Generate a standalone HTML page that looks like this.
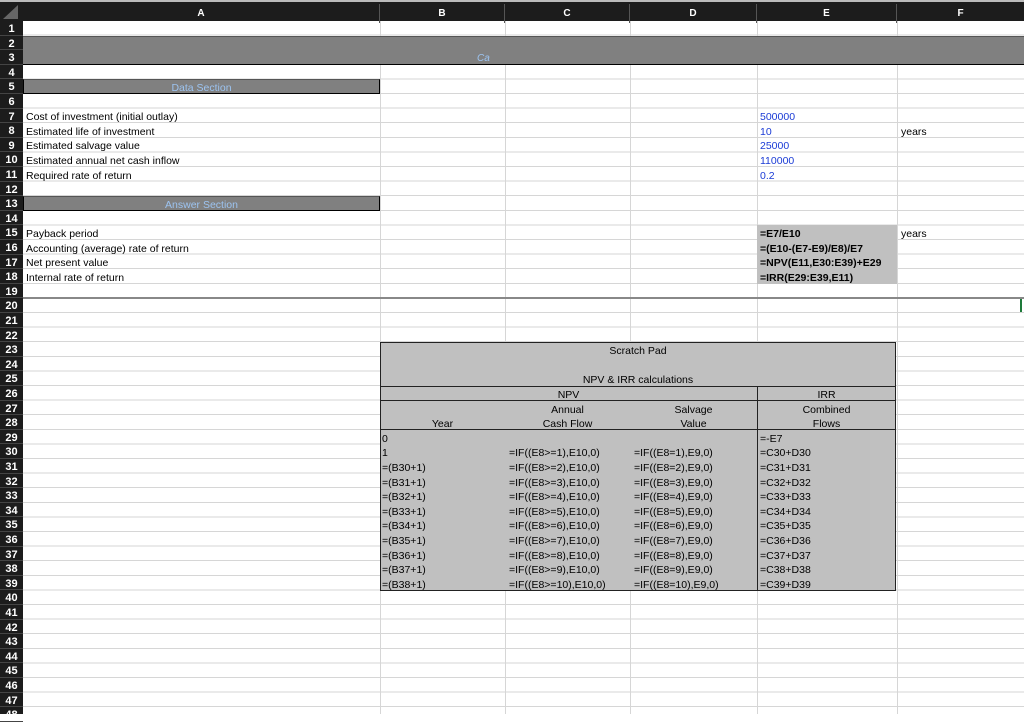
<!DOCTYPE html>
<html><head><meta charset="utf-8"><style>
*{margin:0;padding:0;box-sizing:border-box}
body{width:1024px;height:714px;overflow:hidden;background:#fff;position:relative;font-family:"Liberation Sans",Arial,sans-serif;font-size:10.5px;color:#000}
.a{position:absolute;white-space:nowrap;line-height:14.6px;height:14.6px;padding-top:1.5px}
.grid{position:absolute;left:23px;top:21px;width:1001px;height:693px;background:repeating-linear-gradient(to bottom,transparent 0,transparent 13.6px,#d6d6d6 13.6px,#d6d6d6 14.6px)}
.vl{position:absolute;top:21px;width:1px;height:693px;background:#d6d6d6}
.hdr{position:absolute;left:0;top:0;width:1024px;height:21px;background:#1c1c1c;border-top:2px solid #bbb}
.ch{position:absolute;top:2px;height:19px;line-height:19px;text-align:center;color:#fff;font-weight:bold;font-size:10px;border-right:1px solid #555}
.rh{position:absolute;left:0;top:21px;width:23px;height:693px;background:#1c1c1c}
.rn{position:absolute;left:0;width:23px;height:14.6px;text-align:center;color:#fff;font-weight:bold;font-size:11px;line-height:14.6px;padding-top:1px;border-bottom:1px solid #444}
.c{text-align:center}
.blue{color:#1a3bd6}
.b{font-weight:bold}
</style></head><body>
<div class="grid"></div>
<div class="vl" style="left:380px"></div>
<div class="vl" style="left:505px"></div>
<div class="vl" style="left:630px"></div>
<div class="vl" style="left:757px"></div>
<div class="vl" style="left:897px"></div>

<div class="hdr">
<div style="position:absolute;left:3px;top:3px;width:0;height:0;border-left:15px solid transparent;border-bottom:14px solid #666"></div>
<div class="ch" style="left:23px;width:357px">A</div>
<div class="ch" style="left:380px;width:125px">B</div>
<div class="ch" style="left:505px;width:125px">C</div>
<div class="ch" style="left:630px;width:127px">D</div>
<div class="ch" style="left:757px;width:140px">E</div>
<div class="ch" style="left:897px;width:127px;border-right:none">F</div>
</div>

<div style="position:absolute;left:23px;top:35.6px;width:1001px;height:29.2px;background:#808080;border-top:1px solid #555;border-bottom:1.5px solid #000"></div>
<div class="a" style="left:477px;top:50.2px;color:#9cc3f0;font-style:italic;font-size:10px">Ca</div>

<div class="a c" style="left:23px;top:79.4px;width:357px;background:#808080;border:1px solid #000;border-top-color:#555;color:#9cc3f0;padding-top:0.5px">Data Section</div>
<div class="a c" style="left:23px;top:196.2px;width:357px;background:#808080;border:1px solid #000;border-top-color:#555;color:#9cc3f0;padding-top:0.5px">Answer Section</div>

<div class="a" style="left:26px;top:108.6px">Cost of investment (initial outlay)</div>
<div class="a" style="left:26px;top:123.2px">Estimated life of investment</div>
<div class="a" style="left:26px;top:137.8px">Estimated salvage value</div>
<div class="a" style="left:26px;top:152.4px">Estimated annual net cash inflow</div>
<div class="a" style="left:26px;top:167px">Required rate of return</div>
<div class="a blue" style="left:760px;top:108.6px">500000</div>
<div class="a blue" style="left:760px;top:123.2px">10</div>
<div class="a" style="left:901px;top:123.2px">years</div>
<div class="a blue" style="left:760px;top:137.8px">25000</div>
<div class="a blue" style="left:760px;top:152.4px">110000</div>
<div class="a blue" style="left:760px;top:167px">0.2</div>

<div class="a" style="left:26px;top:225.4px">Payback period</div>
<div class="a" style="left:26px;top:240px">Accounting (average) rate of return</div>
<div class="a" style="left:26px;top:254.6px">Net present value</div>
<div class="a" style="left:26px;top:269.2px">Internal rate of return</div>
<div style="position:absolute;left:757px;top:225.4px;width:140px;height:58.4px;background:#c0c0c0"></div>
<div class="a b" style="left:760px;top:225.4px">=E7/E10</div>
<div class="a b" style="left:760px;top:240px">=(E10-(E7-E9)/E8)/E7</div>
<div class="a b" style="left:760px;top:254.6px">=NPV(E11,E30:E39)+E29</div>
<div class="a b" style="left:760px;top:269.2px">=IRR(E29:E39,E11)</div>
<div class="a" style="left:901px;top:225.4px">years</div>

<div style="position:absolute;left:23px;top:297px;width:1001px;height:2px;background:#888"></div>
<div style="position:absolute;left:1020px;top:299px;width:2px;height:13px;background:#1e7a3a"></div>

<div style="position:absolute;left:380px;top:342px;width:516px;height:249px;background:#c0c0c0;border:1px solid #222"></div>
<div style="position:absolute;left:380px;top:385.5px;width:516px;height:1px;background:#222"></div>
<div style="position:absolute;left:380px;top:400.1px;width:516px;height:1px;background:#222"></div>
<div style="position:absolute;left:380px;top:429.3px;width:516px;height:1px;background:#222"></div>
<div style="position:absolute;left:757px;top:385.5px;width:1px;height:205px;background:#222"></div>
<div class="a c" style="left:380px;top:342.6px;width:516px">Scratch Pad</div>
<div class="a c" style="left:380px;top:371.8px;width:516px">NPV &amp; IRR calculations</div>
<div class="a c" style="left:380px;top:386.4px;width:377px">NPV</div>
<div class="a c" style="left:757px;top:386.4px;width:139px">IRR</div>
<div class="a c" style="left:505px;top:401px;width:125px">Annual</div>
<div class="a c" style="left:630px;top:401px;width:127px">Salvage</div>
<div class="a c" style="left:757px;top:401px;width:139px">Combined</div>
<div class="a c" style="left:380px;top:415.6px;width:125px">Year</div>
<div class="a c" style="left:505px;top:415.6px;width:125px">Cash Flow</div>
<div class="a c" style="left:630px;top:415.6px;width:127px">Value</div>
<div class="a c" style="left:757px;top:415.6px;width:139px">Flows</div>

<div class="a" style="left:382px;top:430.2px">0</div>
<div class="a" style="left:760px;top:430.2px">=-E7</div>
<div class="a" style="left:382px;top:444.8px">1</div>
<div class="a" style="left:509px;top:444.8px">=IF((E8&gt;=1),E10,0)</div>
<div class="a" style="left:634px;top:444.8px">=IF((E8=1),E9,0)</div>
<div class="a" style="left:760px;top:444.8px">=C30+D30</div>

<div class="a" style="left:382px;top:459.4px">=(B30+1)</div><div class="a" style="left:509px;top:459.4px">=IF((E8&gt;=2),E10,0)</div><div class="a" style="left:634px;top:459.4px">=IF((E8=2),E9,0)</div><div class="a" style="left:760px;top:459.4px">=C31+D31</div>
<div class="a" style="left:382px;top:474px">=(B31+1)</div><div class="a" style="left:509px;top:474px">=IF((E8&gt;=3),E10,0)</div><div class="a" style="left:634px;top:474px">=IF((E8=3),E9,0)</div><div class="a" style="left:760px;top:474px">=C32+D32</div>
<div class="a" style="left:382px;top:488.6px">=(B32+1)</div><div class="a" style="left:509px;top:488.6px">=IF((E8&gt;=4),E10,0)</div><div class="a" style="left:634px;top:488.6px">=IF((E8=4),E9,0)</div><div class="a" style="left:760px;top:488.6px">=C33+D33</div>
<div class="a" style="left:382px;top:503.2px">=(B33+1)</div><div class="a" style="left:509px;top:503.2px">=IF((E8&gt;=5),E10,0)</div><div class="a" style="left:634px;top:503.2px">=IF((E8=5),E9,0)</div><div class="a" style="left:760px;top:503.2px">=C34+D34</div>
<div class="a" style="left:382px;top:517.8px">=(B34+1)</div><div class="a" style="left:509px;top:517.8px">=IF((E8&gt;=6),E10,0)</div><div class="a" style="left:634px;top:517.8px">=IF((E8=6),E9,0)</div><div class="a" style="left:760px;top:517.8px">=C35+D35</div>
<div class="a" style="left:382px;top:532.4px">=(B35+1)</div><div class="a" style="left:509px;top:532.4px">=IF((E8&gt;=7),E10,0)</div><div class="a" style="left:634px;top:532.4px">=IF((E8=7),E9,0)</div><div class="a" style="left:760px;top:532.4px">=C36+D36</div>
<div class="a" style="left:382px;top:547px">=(B36+1)</div><div class="a" style="left:509px;top:547px">=IF((E8&gt;=8),E10,0)</div><div class="a" style="left:634px;top:547px">=IF((E8=8),E9,0)</div><div class="a" style="left:760px;top:547px">=C37+D37</div>
<div class="a" style="left:382px;top:561.6px">=(B37+1)</div><div class="a" style="left:509px;top:561.6px">=IF((E8&gt;=9),E10,0)</div><div class="a" style="left:634px;top:561.6px">=IF((E8=9),E9,0)</div><div class="a" style="left:760px;top:561.6px">=C38+D38</div>
<div class="a" style="left:382px;top:576.2px">=(B38+1)</div><div class="a" style="left:509px;top:576.2px">=IF((E8&gt;=10),E10,0)</div><div class="a" style="left:634px;top:576.2px">=IF((E8=10),E9,0)</div><div class="a" style="left:760px;top:576.2px">=C39+D39</div>

<div class="rh">
<div class="rn" style="top:0px">1</div><div class="rn" style="top:14.6px">2</div><div class="rn" style="top:29.2px">3</div><div class="rn" style="top:43.8px">4</div><div class="rn" style="top:58.4px">5</div><div class="rn" style="top:73px">6</div><div class="rn" style="top:87.6px">7</div><div class="rn" style="top:102.2px">8</div><div class="rn" style="top:116.8px">9</div><div class="rn" style="top:131.4px">10</div><div class="rn" style="top:146px">11</div><div class="rn" style="top:160.6px">12</div><div class="rn" style="top:175.2px">13</div><div class="rn" style="top:189.8px">14</div><div class="rn" style="top:204.4px">15</div><div class="rn" style="top:219px">16</div><div class="rn" style="top:233.6px">17</div><div class="rn" style="top:248.2px">18</div><div class="rn" style="top:262.8px">19</div><div class="rn" style="top:277.4px">20</div><div class="rn" style="top:292px">21</div><div class="rn" style="top:306.6px">22</div><div class="rn" style="top:321.2px">23</div><div class="rn" style="top:335.8px">24</div><div class="rn" style="top:350.4px">25</div><div class="rn" style="top:365px">26</div><div class="rn" style="top:379.6px">27</div><div class="rn" style="top:394.2px">28</div><div class="rn" style="top:408.8px">29</div><div class="rn" style="top:423.4px">30</div><div class="rn" style="top:438px">31</div><div class="rn" style="top:452.6px">32</div><div class="rn" style="top:467.2px">33</div><div class="rn" style="top:481.8px">34</div><div class="rn" style="top:496.4px">35</div><div class="rn" style="top:511px">36</div><div class="rn" style="top:525.6px">37</div><div class="rn" style="top:540.2px">38</div><div class="rn" style="top:554.8px">39</div><div class="rn" style="top:569.4px">40</div><div class="rn" style="top:584px">41</div><div class="rn" style="top:598.6px">42</div><div class="rn" style="top:613.2px">43</div><div class="rn" style="top:627.8px">44</div><div class="rn" style="top:642.4px">45</div><div class="rn" style="top:657px">46</div><div class="rn" style="top:671.6px">47</div><div class="rn" style="top:686.2px">48</div>
</div>
</body></html>
